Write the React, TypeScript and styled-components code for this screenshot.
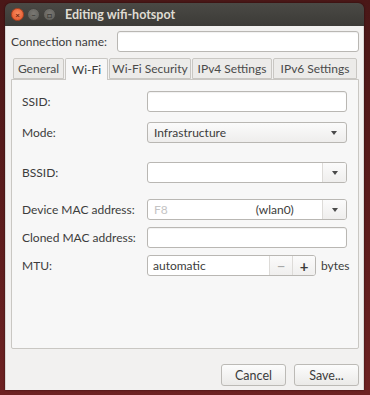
import styled, { createGlobalStyle } from "styled-components";

const GlobalStyle = createGlobalStyle`
  html, body {
    margin: 0;
    padding: 0;
    background: linear-gradient(180deg, #4a1717 0%, #5e1c1c 60%, #6d2222 100%);
    width: 370px;
    height: 395px;
    overflow: hidden;
  }
  * { box-sizing: border-box; }
`;

const Window = styled.div`
  margin: 3px 6px 0 5px;
  width: 359px;
  height: 387px;
  display: flex;
  flex-direction: column;
  border-radius: 6px 6px 0 0;
  overflow: hidden;
  box-shadow: 0 0 2px rgba(0, 0, 0, 0.6);
  font-family: Lato, "DejaVu Sans", sans-serif;
  font-size: 12px;
  color: #3c3c3c;
  white-space: nowrap;
`;

const TitleBar = styled.div`
  height: 23px;
  flex: none;
  display: flex;
  align-items: center;
  padding-left: 6px;
  background: linear-gradient(180deg, #4a4945 0%, #3c3b37 100%);
`;

const WinButton = styled.span<{ $close?: boolean }>`
  width: 13px;
  height: 13px;
  border-radius: 50%;
  margin-right: 3px;
  display: flex;
  align-items: center;
  justify-content: center;
  background: ${({ $close }) =>
    $close
      ? "radial-gradient(circle at 50% 40%, #f98a5c, #e0522a)"
      : "radial-gradient(circle at 50% 40%, #7a7873, #5c5b56)"};
  border: 1px solid ${({ $close }) => ($close ? "#b3431f" : "#44433f")};
  color: ${({ $close }) => ($close ? "#6b2410" : "#3a3935")};
  font-size: 8px;
  font-weight: bold;
  line-height: 1;
`;

const Title = styled.span`
  margin-left: 6px;
  font-family: Lato, "DejaVu Sans", sans-serif;
  font-weight: 700;
  font-size: 12.5px;
  color: #dfdbd2;
`;

const Body = styled.div`
  flex: 1;
  display: flex;
  flex-direction: column;
  background: #f2f1f0;
  padding: 5px 4px 3px 5px;
  border-left: 1px solid #d8d6d3;
  border-right: 1px solid #d8d6d3;
`;

const NameRow = styled.div`
  display: flex;
  align-items: center;
  height: 21px;
`;

const NameLabel = styled.span`
  width: 106px;
  flex: none;
`;

const Entry = styled.div`
  height: 21px;
  flex: 1;
  background: #ffffff;
  border: 1px solid #b9b7b3;
  border-radius: 3px;
  box-shadow: inset 0 1px 1px rgba(0, 0, 0, 0.06);
`;

const Notebook = styled.div`
  margin-top: 6px;
  display: flex;
  flex-direction: column;
  height: 291px;
`;

const TabStrip = styled.div`
  display: flex;
  height: 21px;
  padding-left: 2px;
  align-items: flex-end;
`;

const Tab = styled.div<{ $active?: boolean; $width: number }>`
  width: ${({ $width }) => $width}px;
  height: ${({ $active }) => ($active ? "22px" : "21px")};
  display: flex;
  align-items: center;
  justify-content: center;
  color: ${({ $active }) => ($active ? "#3c3c3c" : "#4a4a4a")};
  background: ${({ $active }) => ($active ? "#f7f7f7" : "#ecebe9")};
  border: 1px solid #c9c7c3;
  border-bottom: ${({ $active }) => ($active ? "none" : "1px solid #c9c7c3")};
  border-radius: 2px 2px 0 0;
  margin-right: 1px;
  margin-bottom: ${({ $active }) => ($active ? "-1px" : "0")};
  position: relative;
  z-index: ${({ $active }) => ($active ? 1 : 0)};
`;

const Panel = styled.div`
  flex: 1;
  background: #f7f7f7;
  border: 1px solid #c9c7c3;
  border-radius: 0 0 2px 2px;
  padding: 11px 11px 0 10px;
  display: flex;
  flex-direction: column;
`;

const Row = styled.div<{ $top: number }>`
  display: flex;
  align-items: center;
  height: 21px;
  margin-top: ${({ $top }) => $top}px;
`;

const Label = styled.span`
  width: 125px;
  flex: none;
`;

const Combo = styled.div<{ $button?: boolean }>`
  flex: 1;
  height: 21px;
  display: flex;
  align-items: stretch;
  border: 1px solid #b9b7b3;
  border-radius: 3px;
  background: ${({ $button }) =>
    $button ? "linear-gradient(180deg, #fbfbfb 0%, #eeedec 100%)" : "#ffffff"};
  overflow: hidden;
`;

const ComboText = styled.div`
  flex: 1;
  display: flex;
  align-items: center;
  padding-left: 6px;
  color: #3c3c3c;
`;

const ComboArrow = styled.div<{ $sep?: boolean }>`
  width: 24px;
  display: flex;
  align-items: center;
  justify-content: center;
  border-left: ${({ $sep }) => ($sep ? "1px solid #dddbd8" : "none")};
  background: ${({ $sep }) =>
    $sep ? "linear-gradient(180deg, #fbfbfb 0%, #efeeed 100%)" : "transparent"};
`;

const Arrow = styled.span`
  width: 0;
  height: 0;
  border-left: 3.5px solid transparent;
  border-right: 3.5px solid transparent;
  border-top: 4px solid #4a4a4a;
`;

const Masked = styled.span`
  color: #c4c4c4;
  margin-right: 88px;
`;

const Spin = styled.div`
  width: 169px;
  height: 21px;
  flex: none;
  display: flex;
  border: 1px solid #b9b7b3;
  border-radius: 3px;
  background: #ffffff;
  overflow: hidden;
`;

const SpinValue = styled.div`
  flex: 1;
  display: flex;
  align-items: center;
  padding-left: 5px;
`;

const SpinButton = styled.div<{ $dim?: boolean }>`
  width: 23px;
  display: flex;
  align-items: center;
  justify-content: center;
  border-left: 1px solid #dddbd8;
  font-size: 15px;
  font-weight: ${({ $dim }) => ($dim ? 400 : 700)};
  color: ${({ $dim }) => ($dim ? "#a8a8a8" : "#3c3c3c")};
  background: linear-gradient(180deg, #fbfbfb 0%, #f0efee 100%);
`;

const Unit = styled.span`
  margin-left: 5px;
`;

const Actions = styled.div`
  margin-top: 15px;
  display: flex;
  justify-content: flex-end;
  gap: 8px;
`;

const Button = styled.button`
  width: 65px;
  height: 22px;
  border: 1px solid #bcbab6;
  border-radius: 3px;
  background: linear-gradient(180deg, #fcfcfc 0%, #ebeae8 100%);
  font-family: Lato, "DejaVu Sans", sans-serif;
  font-size: 12.5px;
  color: #3c3c3c;
  padding: 0;
`;

export default function App() {
  return (
    <>
      <GlobalStyle />
      <Window>
        <TitleBar>
          <WinButton $close>×</WinButton>
          <WinButton>–</WinButton>
          <WinButton>□</WinButton>
          <Title>Editing wifi-hotspot</Title>
        </TitleBar>
        <Body>
          <NameRow>
            <NameLabel>Connection name:</NameLabel>
            <Entry />
          </NameRow>
          <Notebook>
            <TabStrip>
              <Tab $width={51}>General</Tab>
              <Tab $width={43} $active>
                Wi-Fi
              </Tab>
              <Tab $width={82}>Wi-Fi Security</Tab>
              <Tab $width={80}>IPv4 Settings</Tab>
              <Tab $width={84}>IPv6 Settings</Tab>
            </TabStrip>
            <Panel>
              <Row $top={0}>
                <Label>SSID:</Label>
                <Entry />
              </Row>
              <Row $top={10}>
                <Label>Mode:</Label>
                <Combo $button>
                  <ComboText>Infrastructure</ComboText>
                  <ComboArrow>
                    <Arrow />
                  </ComboArrow>
                </Combo>
              </Row>
              <Row $top={19}>
                <Label>BSSID:</Label>
                <Combo>
                  <ComboText />
                  <ComboArrow $sep>
                    <Arrow />
                  </ComboArrow>
                </Combo>
              </Row>
              <Row $top={16}>
                <Label>Device MAC address:</Label>
                <Combo>
                  <ComboText>
                    <Masked>F8</Masked>(wlan0)
                  </ComboText>
                  <ComboArrow $sep>
                    <Arrow />
                  </ComboArrow>
                </Combo>
              </Row>
              <Row $top={7}>
                <Label>Cloned MAC address:</Label>
                <Entry />
              </Row>
              <Row $top={7}>
                <Label>MTU:</Label>
                <Spin>
                  <SpinValue>automatic</SpinValue>
                  <SpinButton $dim>−</SpinButton>
                  <SpinButton>+</SpinButton>
                </Spin>
                <Unit>bytes</Unit>
              </Row>
            </Panel>
          </Notebook>
          <Actions>
            <Button>Cancel</Button>
            <Button>Save...</Button>
          </Actions>
        </Body>
      </Window>
    </>
  );
}
